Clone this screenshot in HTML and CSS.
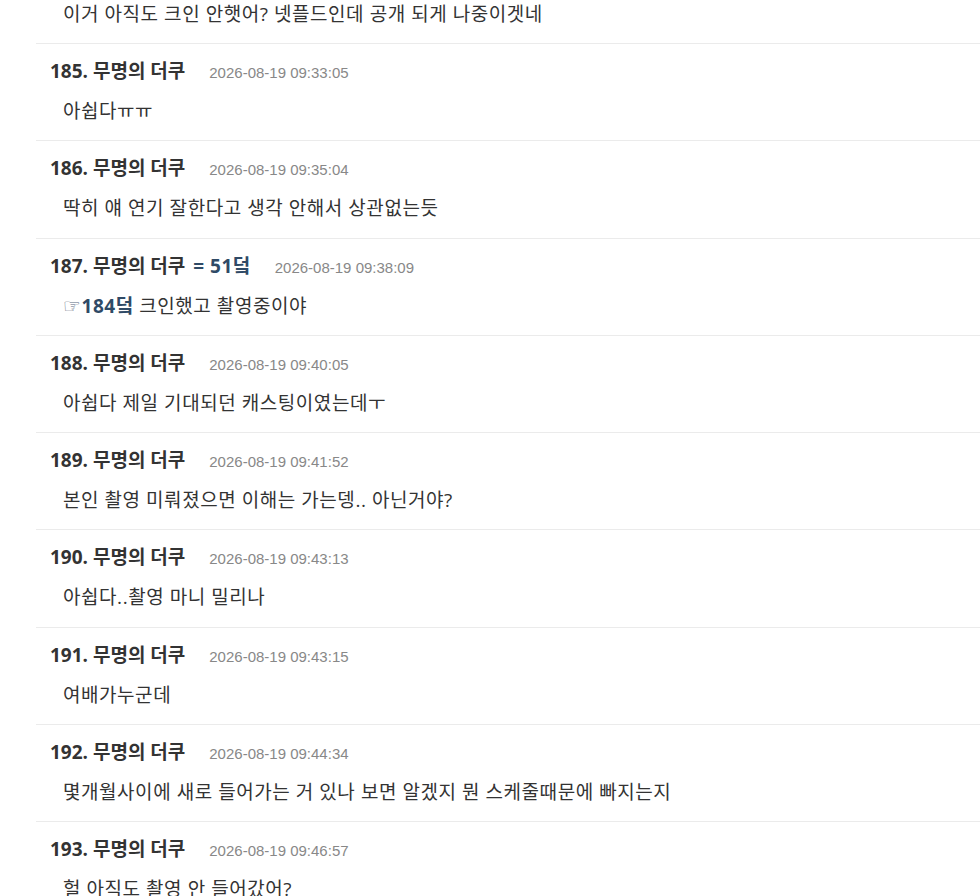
FILE: index.html
```html
<!DOCTYPE html>
<html>
<head>
    <title>댓글</title>
    <meta charset="utf-8">
    <meta name="viewport" content="width=device-width, initial-scale=1.0">
    <link rel="stylesheet" href="styles.css">
</head>
<body>
    <div class="comments">
        <div class="comment cut">
            <div class="body">이거 아직도 크인 안햇어? 넷플드인데 공개 되게 나중이겟네</div>
        </div>
        <div class="comment">
            <div class="head"><span class="name">185. 무명의 더쿠</span><span class="date">2026-08-19 09:33:05</span></div>
            <div class="body">아쉽다ㅠㅠ</div>
        </div>
        <div class="comment">
            <div class="head"><span class="name">186. 무명의 더쿠</span><span class="date">2026-08-19 09:35:04</span></div>
            <div class="body">딱히 얘 연기 잘한다고 생각 안해서 상관없는듯</div>
        </div>
        <div class="comment">
            <div class="head"><span class="name">187. 무명의 더쿠 <span class="ref alias">= 51덬</span></span><span class="date">2026-08-19 09:38:09</span></div>
            <div class="body"><span class="ref"><span class="hand">☞</span>184덬</span> 크인했고 촬영중이야</div>
        </div>
        <div class="comment">
            <div class="head"><span class="name">188. 무명의 더쿠</span><span class="date">2026-08-19 09:40:05</span></div>
            <div class="body">아쉽다 제일 기대되던 캐스팅이였는데ㅜ</div>
        </div>
        <div class="comment">
            <div class="head"><span class="name">189. 무명의 더쿠</span><span class="date">2026-08-19 09:41:52</span></div>
            <div class="body">본인 촬영 미뤄졌으면 이해는 가는뎅.. 아닌거야?</div>
        </div>
        <div class="comment">
            <div class="head"><span class="name">190. 무명의 더쿠</span><span class="date">2026-08-19 09:43:13</span></div>
            <div class="body">아쉽다..촬영 마니 밀리나</div>
        </div>
        <div class="comment">
            <div class="head"><span class="name">191. 무명의 더쿠</span><span class="date">2026-08-19 09:43:15</span></div>
            <div class="body">여배가누군데</div>
        </div>
        <div class="comment">
            <div class="head"><span class="name">192. 무명의 더쿠</span><span class="date">2026-08-19 09:44:34</span></div>
            <div class="body">몇개월사이에 새로 들어가는 거 있나 보면 알겠지 뭔 스케줄때문에 빠지는지</div>
        </div>
        <div class="comment">
            <div class="head"><span class="name">193. 무명의 더쿠</span><span class="date">2026-08-19 09:46:57</span></div>
            <div class="body">헐 아직도 촬영 안 들어갔어?</div>
        </div>
    </div>
</body>
</html>
```

FILE: styles.css
```css
body {
    margin: 0;
    background: #fff;
    font-family: "Open Sans", "Noto Sans CJK KR", sans-serif;
    color: #333;
    overflow: hidden;
}
.comments {
    margin-left: 36px;
}
.comment {
    border-top: 1px solid #ebebeb;
    padding: 13px 0 15.25px 14px;
}
.comment.cut {
    border-top: none;
    padding-top: 0;
    padding-bottom: 15px;
}
.head {
    display: flex;
    align-items: baseline;
    height: 28px;
    line-height: 28px;
}
.name {
    font-size: 19px;
    font-weight: 700;
    color: #333;
}
.date {
    margin-left: 24px;
    font-family: "Liberation Sans", Arial, sans-serif;
    font-size: 15px;
    color: #888;
}
.ref {
    color: #2f4a66;
    font-weight: 700;
}
.alias {
    margin-left: 3px;
    letter-spacing: 0.5px;
}
.hand {
    font-family: "DejaVu Sans", sans-serif;
    font-size: 20px;
    font-weight: 400;
    color: #5a6a80;
}
.body {
    margin-top: 12px;
    padding-left: 13px;
    height: 28px;
    font-size: 19px;
    letter-spacing: 0.55px;
    line-height: 28px;
}
.cut .body {
    margin-top: 0;
}
```
